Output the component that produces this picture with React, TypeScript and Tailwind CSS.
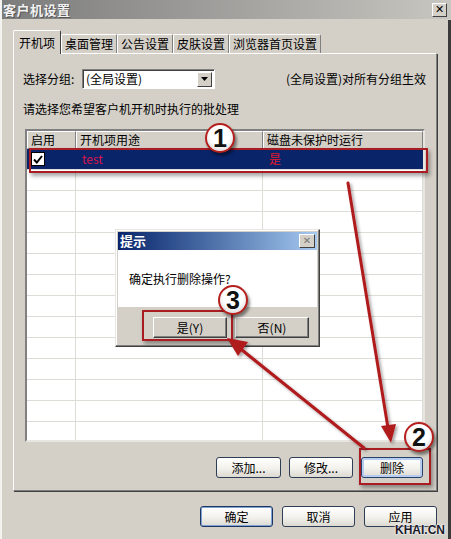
import React from "react";

const CJK = { fontFamily: '"Noto Sans CJK SC", "Liberation Sans", sans-serif' };

const TABS = ["桌面管理", "公告设置", "皮肤设置", "浏览器首页设置"];

function XpButton({ label, w, primary, focus }: { label: string; w: string; primary?: boolean; focus?: boolean }) {
  return (
    <div
      className={`${w} h-[21px] rounded-[3px] border flex items-center justify-center text-[12px] text-black bg-gradient-to-b from-[#ffffff] via-[#f4f3ee] to-[#dcdad2] ${
        primary ? "border-[#1c3660] shadow-[inset_0_0_0_1px_#7fa2d8]" : focus ? "border-[#26406a] shadow-[inset_0_0_0_2px_#b6cdf0]" : "border-[#2e3e55]"
      }`}
    >
      {label}
    </div>
  );
}

function ClassicButton({ label, w }: { label: string; w: string }) {
  return (
    <div className={`${w} h-[21px] bg-[#d4d0c8] border border-t-white border-l-white border-r-[#404040] border-b-[#404040] shadow-[inset_-1px_-1px_0_#808080] flex items-center justify-center text-[12px]`}>
      {label}
    </div>
  );
}

function Marker({ n, cls }: { n: string; cls: string }) {
  return (
    <div
      className={`absolute ${cls} w-[30px] h-[30px] rounded-full bg-white border-[2px] border-[#b5201f] shadow-[2px_3px_3px_rgba(0,0,0,0.45),inset_0_-3px_4px_rgba(0,0,0,0.12)] flex items-center justify-center`}
    >
      <span className="text-[25px] leading-none font-bold text-[#111]" style={{ fontFamily: '"Liberation Sans", Arial, sans-serif' }}>
        {n}
      </span>
    </div>
  );
}

export default function App() {
  const rows = Array.from({ length: 14 });
  return (
    <div className="relative w-[451px] h-[539px] overflow-hidden bg-[#d4d0c8] text-black text-[12px] border-l-2 border-l-[#f4f3ef]" style={CJK}>
      {/* right edge of the window */}
      <div className="absolute right-0 top-[20px] bottom-0 w-[3px] bg-[#3a3a3a]" />

      {/* Title bar */}
      <div className="h-[19px] flex items-center justify-between pl-[1px] pr-[4px] bg-gradient-to-r from-[#7c7c7c] to-[#c8c6c0]">
        <span className="text-[13px] font-bold text-[#f2f2f2] tracking-[0.5px] [text-shadow:1px_1px_0_#555]">客户机设置</span>
        <div className="w-[15px] h-[14px] bg-[#d4d0c8] border border-t-white border-l-white border-r-[#404040] border-b-[#404040] flex items-center justify-center text-[11px] font-bold leading-none" style={{ fontFamily: '"DejaVu Sans", sans-serif' }}>
          ✕
        </div>
      </div>

      {/* Tabs */}
      <div className="ml-[11px] mt-[11px] flex items-end h-[23px]">
        <div className="relative z-10 h-[24px] w-[48px] -mb-[1px] bg-[#d4d0c8] border-t border-l border-t-white border-l-white border-r border-r-[#404040] rounded-t-[2px] flex items-center justify-center text-[12px]">
          开机项
        </div>
        {TABS.map((t) => (
          <div key={t} className="h-[19px] px-[3px] bg-[#d4d0c8] border-t border-l border-t-white border-l-white border-r border-r-[#808080] rounded-t-[2px] flex items-center text-[12px]">
            {t}
          </div>
        ))}
      </div>

      {/* Tab panel */}
      <div className="ml-[11px] w-[424px] h-[438px] border border-t-white border-l-white border-r-[#808080] border-b-[#808080] shadow-[1px_1px_0_#404040] flex flex-col pl-[9px] pr-[10px] pt-[15px]">
        <div className="flex items-center h-[20px]">
          <span className="w-[59px]">选择分组:</span>
          <div className="w-[133px] h-[20px] bg-white border-t border-l border-t-[#808080] border-l-[#808080] border-r border-b border-r-white border-b-white shadow-[inset_1px_1px_0_#404040] flex items-center justify-between pl-[3px] pr-[2px]">
            <span>(全局设置)</span>
            <div className="w-[15px] h-[15px] bg-[#d4d0c8] border border-t-white border-l-white border-r-[#404040] border-b-[#404040] flex items-center justify-center">
              <svg width="7" height="4" viewBox="0 0 7 4">
                <path d="M0 0h7L3.5 4z" fill="#000" />
              </svg>
            </div>
          </div>
          <span className="ml-auto">(全局设置)对所有分组生效</span>
        </div>

        <div className="mt-[12px] h-[16px] leading-[16px]">请选择您希望客户机开机时执行的批处理</div>

        {/* List */}
        <div className="mt-[12px] ml-[2px] w-[400px] h-[313px] bg-white border-2 border-t-[#808080] border-l-[#808080] border-r-[#e8e6e0] border-b-[#e8e6e0] overflow-hidden">
          <div className="flex h-[18px]">
            {[
              ["启用", "w-[49px]"],
              ["开机项用途", "w-[187px]"],
              ["磁盘未保护时运行", "w-[160px]"],
            ].map(([h, w]) => (
              <div key={h} className={`${w} bg-[#d4d0c8] border border-t-white border-l-white border-r-[#808080] border-b-[#808080] pl-[3px] flex items-center`}>
                {h}
              </div>
            ))}
          </div>
          <div className="flex h-[21px] border-b border-[#e2e0da]">
            <div className="w-[49px] bg-[#0a246a] flex items-center pl-[4px]">
              <div className="w-[14px] h-[14px] bg-white border border-black flex items-center justify-center">
                <svg width="10" height="9" viewBox="0 0 10 9">
                  <path d="M1 4.5l2.8 3L9 1" stroke="#000" strokeWidth="2" fill="none" />
                </svg>
              </div>
            </div>
            <div className="w-[187px] bg-[#0a246a] text-[#d8154a] pl-[5px] flex items-center border-l border-[#0a246a]">test</div>
            <div className="w-[160px] bg-[#0a246a] text-[#e01a2c] pl-[5px] flex items-center border-l border-[#0a246a]">是</div>
          </div>
          {rows.map((_, i) => (
            <div key={i} className="flex h-[21px] border-b border-[#dedcd6]">
              <div className="w-[49px] border-r border-[#dedcd6]" />
              <div className="w-[187px] border-r border-[#dedcd6]" />
              <div className="w-[160px] border-r border-[#dedcd6]" />
            </div>
          ))}
        </div>

        <div className="mt-[15px] flex justify-end gap-[8px] pr-[3px]">
          <XpButton label="添加..." w="w-[65px]" />
          <XpButton label="修改..." w="w-[64px]" />
          <XpButton label="删除" w="w-[62px]" focus />
        </div>
      </div>

      {/* Bottom buttons */}
      <div className="mt-[15px] flex justify-end gap-[9px] pr-[14px]">
        <XpButton label="确定" w="w-[73px]" primary />
        <XpButton label="取消" w="w-[73px]" />
        <XpButton label="应用" w="w-[73px]" />
      </div>

      {/* Confirm dialog */}
      <div className="absolute left-[113px] top-[229px] w-[205px] h-[118px] bg-[#d4d0c8] border border-t-[#e8e6e0] border-l-[#e8e6e0] border-r-[#404040] border-b-[#404040] shadow-[inset_-1px_-1px_0_#808080,inset_1px_1px_0_#fff] p-[2px] flex flex-col">
        <div className="h-[18px] flex items-center justify-between pl-[2px] pr-[2px] bg-gradient-to-r from-[#0a246a] to-[#a6caf0]">
          <span className="text-[13px] font-bold text-white">提示</span>
          <div className="w-[16px] h-[14px] bg-[#d4d0c8] border border-t-white border-l-white border-r-[#404040] border-b-[#404040] flex items-center justify-center text-[10px] text-[#777] leading-none" style={{ fontFamily: '"DejaVu Sans", sans-serif' }}>
            ✕
          </div>
        </div>
        <div className="h-[57px] bg-white pl-[11px] pt-[20px] text-[12px]">确定执行删除操作?</div>
        <div className="flex-1 flex items-start pt-[10px] pl-[35px] gap-[8px]">
          <ClassicButton label="是(Y)" w="w-[74px]" />
          <ClassicButton label="否(N)" w="w-[74px]" />
        </div>
      </div>

      {/* Red highlight boxes */}
      <div className="absolute left-[27px] top-[148px] w-[399px] h-[25px] border-2 border-[#a81c22] shadow-[2px_3px_4px_rgba(0,0,0,0.35)]" />
      <div className="absolute left-[357px] top-[448px] w-[72px] h-[37px] border-2 border-[#a81c22] shadow-[2px_3px_4px_rgba(0,0,0,0.35)]" />
      <div className="absolute left-[140px] top-[310px] w-[91px] h-[31px] border-2 border-[#a81c22] shadow-[2px_3px_4px_rgba(0,0,0,0.35)]" />

      {/* Arrows */}
      <svg className="absolute left-0 top-0" width="451" height="539" viewBox="0 0 451 539">
        <defs>
          <filter id="sh" x="-20%" y="-20%" width="140%" height="140%">
            <feDropShadow dx="2" dy="2" stdDeviation="1.5" floodColor="#000" floodOpacity="0.35" />
          </filter>
        </defs>
        <g filter="url(#sh)" stroke="#b01a1e" fill="#b01a1e" strokeWidth="3" strokeLinecap="round">
          <line x1="346" y1="183" x2="386" y2="428" />
          <path d="M379 426l10 17 5-19z" stroke="none" />
          <line x1="362" y1="448" x2="240" y2="350" />
          <path d="M246 342l-21 -4 11 18z" stroke="none" />
        </g>
      </svg>

      <Marker n="1" cls="left-[203px] top-[123px]" />
      <Marker n="2" cls="left-[402px] top-[422px]" />
      <Marker n="3" cls="left-[216px] top-[285px]" />

      {/* Watermark */}
      <div className="absolute right-[6px] top-[521px] whitespace-nowrap text-[12px] font-bold text-[#1a1a2a] [text-shadow:0_0_2px_#fff,0_0_2px_#fff]" style={{ fontFamily: '"Liberation Sans", Arial, sans-serif' }}>
        KHAI.CN
      </div>
    </div>
  );
}
